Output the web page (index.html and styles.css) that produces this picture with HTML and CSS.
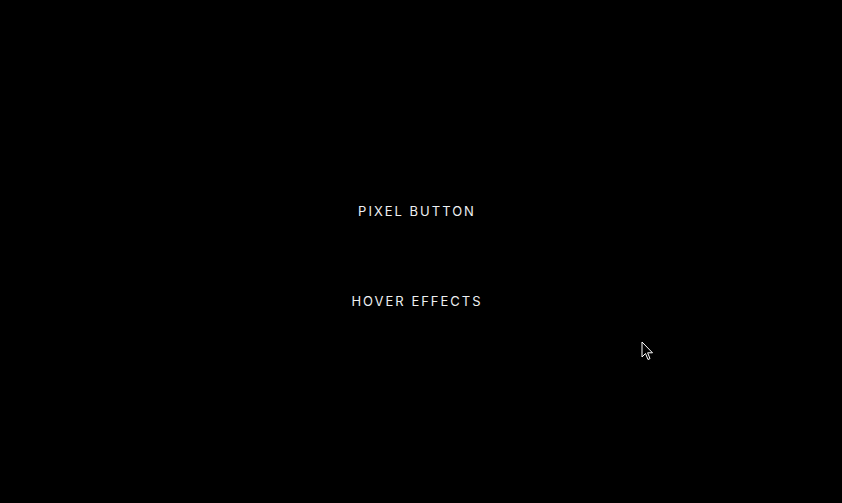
FILE: index.html
```html
<!DOCTYPE html>
<html>
<head>
<meta charset="utf-8">
<link rel="stylesheet" href="styles.css">
</head>
<body>
<main class="stage">
  <button class="pixel-btn">PIXEL BUTTON</button>
  <button class="pixel-btn">HOVER EFFECTS</button>
</main>
<svg class="cursor" width="14" height="22" viewBox="0 0 14 22">
  <path d="M1 1 L1 16 L4.5 12.5 L7 18.5 L9 17.6 L6.6 11.8 L11.5 11.8 Z" fill="#000" stroke="#fff" stroke-width="1"/>
</svg>
</body>
</html>
```
FILE: styles.css
```css
html, body {
  margin: 0;
  padding: 0;
  background: #000;
  height: 100%;
  overflow: hidden;
}
.stage {
  height: 100%;
  display: flex;
  flex-direction: column;
  align-items: center;
  justify-content: center;
  gap: 40px;
  padding: 8px 8px 0 0;
  box-sizing: border-box;
}
.pixel-btn {
  background: transparent;
  border: none;
  color: #eef0f2;
  font-family: "Inter", "Open Sans", sans-serif;
  font-size: 13px;
  font-weight: 400;
  letter-spacing: 2px;
  height: 50px;
  padding: 0 20px;
  cursor: pointer;
}
.cursor {
  position: absolute;
  left: 641px;
  top: 341px;
}
```
